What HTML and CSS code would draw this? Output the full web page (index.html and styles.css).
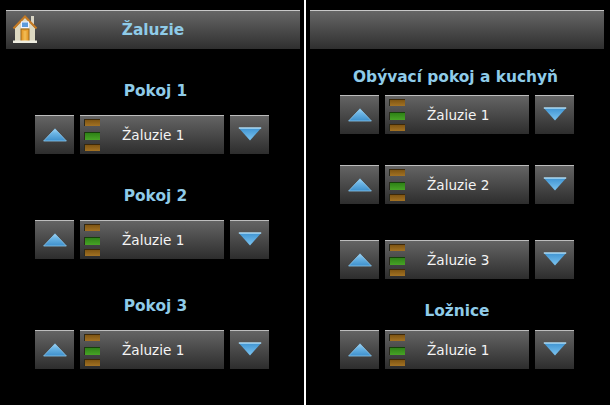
FILE: index.html
```html
<!DOCTYPE html>
<html lang="cs">
<head>
<meta charset="utf-8">
<title>Žaluzie</title>
<link rel="stylesheet" href="styles.css">
</head>
<body>
<svg class="defs" width="0" height="0" aria-hidden="true">
  <defs>
    <linearGradient id="triUp" x1="0" y1="0" x2="0" y2="1"><stop offset="0" stop-color="#a4d6f4"/><stop offset="0.35" stop-color="#6db6e6"/><stop offset="1" stop-color="#3d8fcb"/></linearGradient>
    <linearGradient id="triDown" x1="0" y1="0" x2="0" y2="1"><stop offset="0" stop-color="#3f94d2"/><stop offset="1" stop-color="#7cc4f0"/></linearGradient>
    <symbol id="up" viewBox="0 0 24 14"><path d="M12 .8 23.4 13H.6Z" fill="url(#triUp)" stroke="#8cc8ee" stroke-width=".8"/></symbol>
    <symbol id="down" viewBox="0 0 24 14"><path d="M.8 1H23.2L12 13.4Z" fill="url(#triDown)"/><path d="M.8 1H23.2" stroke="#b4e0f8" stroke-width="1.4"/></symbol>
  </defs>
</svg>
<main class="screen">
  <section class="panel panel-left">
    <header class="bar">
      <svg class="home" viewBox="0 0 26 30" width="26" height="30" aria-hidden="true">
        <rect x="19" y="2" width="3" height="8" fill="#d8d4c4"/>
        <path d="M3 14 13 3 23 14V27H3Z" fill="#ddd9c2"/>
        <path d="M1.500 14.500 13 2.500 24.500 14.500" fill="none" stroke="#c47a24" stroke-width="2.200"/>
        <rect x="9.500" y="8" width="7" height="5.500" fill="#5d9bdc" stroke="#f3f3ff" stroke-width="1"/>
        <rect x="9" y="15" width="8" height="13" fill="#e8a030" stroke="#9a6418" stroke-width="1"/>
        <rect x="11.500" y="17" width="3" height="10" fill="#f0b850"/>
        <rect x="1" y="26.500" width="24" height="2.500" fill="#efeee2"/>
      </svg>
      <h1 class="bar-title">Žaluzie</h1>
    </header>
    <h2 class="room shift-right gap-32">Pokoj 1</h2>
    <div class="controls gap-14">
      <button class="btn arrow" type="button"><svg width="24" height="14"><use href="#up"/></svg></button>
      <button class="btn blind" type="button"><span class="leds"><i class="led amber"></i><i class="led green"></i><i class="led amber"></i></span><span class="label">Žaluzie 1</span></button>
      <button class="btn arrow" type="button"><svg class="d" width="24" height="14"><use href="#down"/></svg></button>
    </div>
    <h2 class="room shift-right gap-31">Pokoj 2</h2>
    <div class="controls gap-14">
      <button class="btn arrow" type="button"><svg width="24" height="14"><use href="#up"/></svg></button>
      <button class="btn blind" type="button"><span class="leds"><i class="led amber"></i><i class="led green"></i><i class="led amber"></i></span><span class="label">Žaluzie 1</span></button>
      <button class="btn arrow" type="button"><svg class="d" width="24" height="14"><use href="#down"/></svg></button>
    </div>
    <h2 class="room shift-right gap-36">Pokoj 3</h2>
    <div class="controls gap-14">
      <button class="btn arrow" type="button"><svg width="24" height="14"><use href="#up"/></svg></button>
      <button class="btn blind" type="button"><span class="leds"><i class="led amber"></i><i class="led green"></i><i class="led amber"></i></span><span class="label">Žaluzie 1</span></button>
      <button class="btn arrow" type="button"><svg class="d" width="24" height="14"><use href="#down"/></svg></button>
    </div>
  </section>
  <section class="panel panel-right">
    <header class="bar"></header>
    <h2 class="room shift-left gap-18">Obývací pokoj a kuchyň</h2>
    <div class="controls gap-8">
      <button class="btn arrow" type="button"><svg width="24" height="14"><use href="#up"/></svg></button>
      <button class="btn blind" type="button"><span class="leds"><i class="led amber"></i><i class="led green"></i><i class="led amber"></i></span><span class="label">Žaluzie 1</span></button>
      <button class="btn arrow" type="button"><svg class="d" width="24" height="14"><use href="#down"/></svg></button>
    </div>
    <div class="controls gap-30">
      <button class="btn arrow" type="button"><svg width="24" height="14"><use href="#up"/></svg></button>
      <button class="btn blind" type="button"><span class="leds"><i class="led amber"></i><i class="led green"></i><i class="led amber"></i></span><span class="label">Žaluzie 2</span></button>
      <button class="btn arrow" type="button"><svg class="d" width="24" height="14"><use href="#down"/></svg></button>
    </div>
    <div class="controls gap-35">
      <button class="btn arrow" type="button"><svg width="24" height="14"><use href="#up"/></svg></button>
      <button class="btn blind" type="button"><span class="leds"><i class="led amber"></i><i class="led green"></i><i class="led amber"></i></span><span class="label">Žaluzie 3</span></button>
      <button class="btn arrow" type="button"><svg class="d" width="24" height="14"><use href="#down"/></svg></button>
    </div>
    <h2 class="room gap-21">Ložnice</h2>
    <div class="controls gap-9">
      <button class="btn arrow" type="button"><svg width="24" height="14"><use href="#up"/></svg></button>
      <button class="btn blind" type="button"><span class="leds"><i class="led amber"></i><i class="led green"></i><i class="led amber"></i></span><span class="label">Žaluzie 1</span></button>
      <button class="btn arrow" type="button"><svg class="d" width="24" height="14"><use href="#down"/></svg></button>
    </div>
  </section>
</main>
</body>
</html>
```
FILE: styles.css
```css
* { box-sizing: border-box; }
html, body { margin: 0; height: 100%; background: #000; overflow: hidden; }
.defs { position: absolute; }
.screen {
  display: grid;
  grid-template-columns: 304px 304px;
  column-gap: 2px;
  width: 610px;
  height: 405px;
  background: #fff;
  font-family: "DejaVu Sans", sans-serif;
}
.panel {
  display: flex;
  flex-direction: column;
  align-items: center;
  height: 405px;
  background: #000;
}
.panel-left { padding: 10px 4px 0 6px; }
.panel-right { padding: 10px 6px 0 4px; }
.bar {
  position: relative;
  display: flex;
  align-items: center;
  justify-content: center;
  flex: none;
  width: 294px;
  height: 39px;
  border-top: 1px solid #c8c8c8;
  background: linear-gradient(#666, #2f2f2f);
}
.home { position: absolute; left: 6px; top: 3px; }
.bar-title {
  margin: 0;
  font-size: 15.4px;
  line-height: 38px;
  font-weight: 700;
  color: #8fcbe8;
}
.room {
  flex: none;
  margin: 0;
  font-size: 15.4px;
  line-height: 20px;
  font-weight: 700;
  color: #8fcbe8;
}
.shift-right { padding-left: 5px; }
.shift-left { padding-right: 3px; }
.controls {
  display: flex;
  flex: none;
  gap: 6px;
  height: 40px;
}
.panel-left .controls { margin-right: 2px; }
.gap-8 { margin-top: 8px; }
.gap-9 { margin-top: 9px; }
.gap-14 { margin-top: 14px; }
.gap-18 { margin-top: 18px; }
.gap-21 { margin-top: 21px; }
.gap-30 { margin-top: 30px; }
.gap-31 { margin-top: 31px; }
.gap-32 { margin-top: 32px; }
.gap-35 { margin-top: 35px; }
.gap-36 { margin-top: 36px; }
.btn {
  display: flex;
  align-items: center;
  height: 39px;
  margin: 0;
  padding: 0;
  border: 0;
  border-top: 1px solid #bdbdbd;
  background: linear-gradient(#646464, #2d2d2d);
  color: #f4f4f4;
  font: inherit;
}
.arrow { justify-content: center; width: 39px; padding-left: 1px; }
.arrow svg { display: block; }
.arrow .d { margin-bottom: 2px; }
.blind { position: relative; width: 144px; padding-left: 42px; }
.leds {
  position: absolute;
  left: 4px;
  top: 3px;
  display: flex;
  flex-direction: column;
}
.led {
  display: block;
  width: 16px;
  height: 7px;
  border-left: 1px solid #2a2a1e;
  box-shadow: inset 0 1px 0 rgba(0,0,0,.5);
}
.amber { background: linear-gradient(#79500f, #a27224); }
.green { height: 8px; margin: 6px 0 4px; background: linear-gradient(#2a7d14, #48a426); }
.label { font-size: 13.6px; line-height: 20px; }
```
